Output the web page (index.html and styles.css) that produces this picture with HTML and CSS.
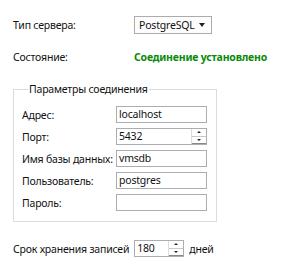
FILE: index.html
```html
<!DOCTYPE html>
<html lang="ru">
<head>
<meta charset="utf-8">
<link rel="stylesheet" href="styles.css">
</head>
<body>
<div class="page">
  <div class="row top">
    <span class="lbl">Тип сервера:</span>
    <div class="combo"><span class="combo-text">PostgreSQL</span><span class="combo-arrow"></span></div>
  </div>
  <div class="row status">
    <span class="lbl">Состояние:</span>
    <span class="ok">Соединение установлено</span>
  </div>
  <fieldset class="group">
    <legend>Параметры соединения</legend>
    <div class="grid">
      <span class="lbl">Адрес:</span>
      <div class="field">localhost</div>
      <span class="lbl">Порт:</span>
      <div class="field spin"><span class="val">5432</span><span class="spin-btns"><span class="sb up"></span><span class="sb down"></span></span></div>
      <span class="lbl">Имя базы данных:</span>
      <div class="field">vmsdb</div>
      <span class="lbl">Пользователь:</span>
      <div class="field">postgres</div>
      <span class="lbl">Пароль:</span>
      <div class="field"></div>
    </div>
  </fieldset>
  <div class="bottom">
    <span class="lbl">Срок хранения записей</span>
    <div class="field spin small"><span class="val">180</span><span class="spin-btns"><span class="sb up"></span><span class="sb down"></span></span></div>
    <span class="lbl">дней</span>
  </div>
</div>
</body>
</html>
```
FILE: styles.css
```css
html, body {
  margin: 0;
  padding: 0;
  background: #fff;
}
body {
  font-family: "Noto Sans", "Open Sans", sans-serif;
  font-size: 10.5px;
  letter-spacing: -0.2px;
  color: #111;
}
.page {
  padding: 16px 0 0 13px;
}
.lbl {
  line-height: 16px;
  white-space: nowrap;
}
.row {
  display: grid;
  grid-template-columns: 121px auto;
  align-items: center;
}
.top {
  height: 18px;
}
.status {
  margin-top: 15px;
  height: 16px;
}
.ok {
  color: #0a8a0a;
  font-weight: bold;
  line-height: 16px;
}
.combo {
  width: 78px;
  height: 18px;
  box-sizing: border-box;
  border: 1px solid #acacac;
  background: #fdfdfd;
  display: flex;
  align-items: center;
  justify-content: space-between;
  padding: 0 6px 0 4px;
}
.combo-arrow {
  width: 0;
  height: 0;
  border-left: 3.5px solid transparent;
  border-right: 3.5px solid transparent;
  border-top: 4px solid #222;
}
.group {
  margin: 16px 0 0 0;
  width: 204px;
  box-sizing: border-box;
  border: 1px solid #dcdcdc;
  padding: 9px 9px 10px 8px;
  min-width: 0;
}
.group legend {
  padding: 0 1px;
  margin-left: 6px;
  line-height: 16px;
}
.grid {
  display: grid;
  grid-template-columns: 94px 91px;
  row-gap: 5px;
  align-items: center;
}
.field {
  height: 17px;
  box-sizing: border-box;
  border: 1px solid #abadb3;
  padding: 0 2px;
  line-height: 15px;
  background: #fff;
}
.spin {
  display: flex;
  justify-content: space-between;
  padding-right: 0;
}
.spin-btns {
  display: flex;
  flex-direction: column;
  width: 14px;
  border-left: 1px solid #dcdcdc;
}
.sb {
  flex: 1;
  position: relative;
  background: #fff;
}
.sb.up {
  border-bottom: 1px solid #c8c8c8;
}
.sb.down {
  border-bottom: 1px solid #888;
}
.sb::after {
  content: "";
  position: absolute;
  left: 5px;
  width: 0;
  height: 0;
  border-left: 2px solid transparent;
  border-right: 2px solid transparent;
}
.sb.up::after {
  top: 2px;
  border-bottom: 2px solid #222;
}
.sb.down::after {
  top: 2px;
  border-top: 2px solid #222;
}
.bottom {
  margin-top: 18px;
  display: flex;
  align-items: center;
  gap: 5px;
}
.small {
  width: 50px;
}
```
